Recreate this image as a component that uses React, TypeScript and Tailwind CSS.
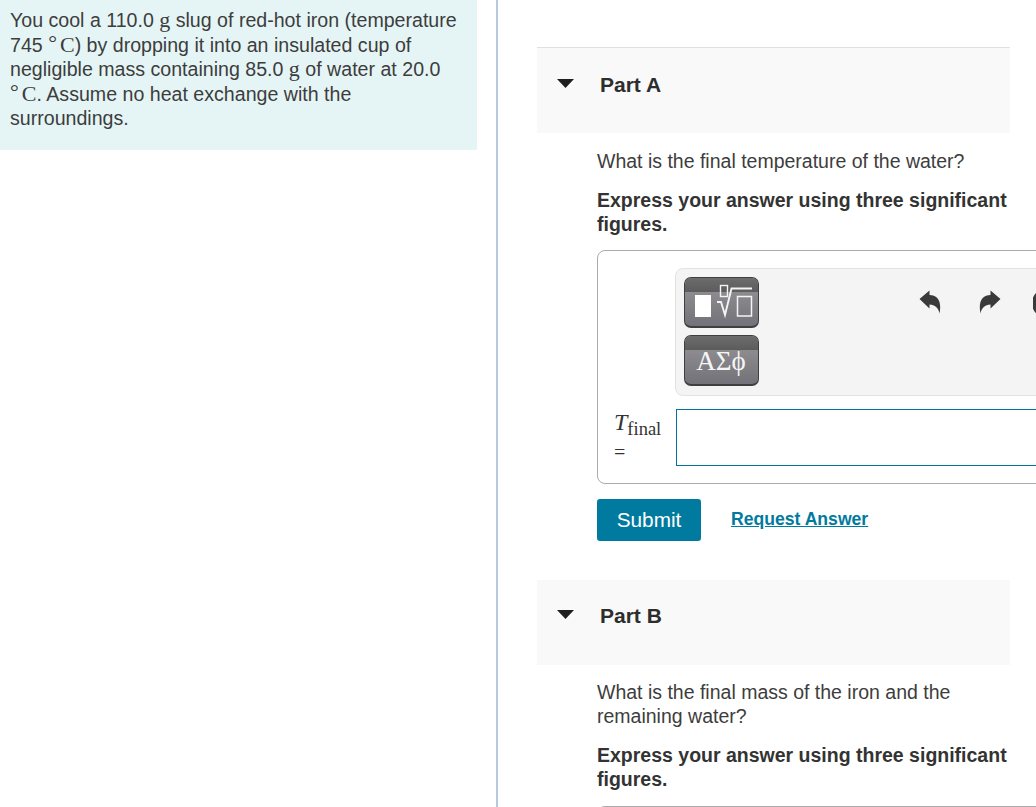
const sans = "font-['Liberation_Sans',Arial,sans-serif]";

function Serif({ children }: { children: React.ReactNode }) {
  return <span className="font-['Liberation_Serif',serif] text-[22px]">{children}</span>;
}

function Degree() {
  return <span className="font-['Liberation_Serif',serif] text-[22px]"><span className="relative top-[-2px] mr-[3px]">°</span>C</span>;
}

function PartHeader({ label, top = false }: { label: string; top?: boolean }) {
  return (
    <div className={`flex items-center bg-[#f9f9f9] pl-[20px] ${top ? "h-[86px] border-t border-[#e0e0e0]" : "h-[85px]"}`}>
      <svg width="17" height="9" viewBox="0 0 17 9" className={`mr-[26px] ${top ? "mt-[-14px]" : "mt-[-17px]"}`}>
        <path d="M0 0 H17 L8.5 9 Z" fill="#1f1f1f" />
      </svg>
      <span className={`text-[21px] font-bold text-[#2d2d2d] ${top ? "mt-[-11px]" : "mt-[-13px]"}`}>{label}</span>
    </div>
  );
}

function ToolButton({ children }: { children: React.ReactNode }) {
  return (
    <div className="relative w-[75px] h-[51px] rounded-[7px] border border-[#3f3f3f] border-b-2 overflow-hidden bg-gradient-to-b from-[#989699] to-[#737278]">
      <div className="absolute inset-x-0 top-0 h-[14px] bg-gradient-to-b from-[#6c6c6c] to-[#5c5c5c]" />
      <div className="absolute inset-0 flex items-center justify-center">{children}</div>
    </div>
  );
}

export default function App() {
  return (
    <div className={`${sans} relative h-[807px] w-[1036px] overflow-hidden bg-white flex`}>
      <div className="w-[477px] shrink-0">
        <div className="h-[150px] bg-[#e5f5f6] pl-[10px] pt-[8px] text-[19.6px] leading-[24.5px] text-[#3d3d3d]">
          <div className="whitespace-nowrap">You cool a 110.0 <Serif>g</Serif> slug of red-hot iron (temperature</div>
          <div className="whitespace-nowrap">745 <Degree />) by dropping it into an insulated cup of</div>
          <div className="whitespace-nowrap">negligible mass containing 85.0 <Serif>g</Serif> of water at 20.0</div>
          <div className="whitespace-nowrap"><Degree />. Assume no heat exchange with the</div>
          <div className="whitespace-nowrap">surroundings.</div>
        </div>
      </div>
      <div className="ml-[19px] w-[2px] shrink-0 bg-[#b8c9de]" />
      <div className="ml-[39px] w-[473px] shrink-0 pt-[47px] text-[19.5px] leading-[24px] text-[#3d3d3d]">
        <PartHeader label="Part A" top />
        <div className="pl-[60px] w-[473px]">
          <p className="mt-[16px] whitespace-nowrap">What is the final temperature of the water?</p>
          <p className="mt-[15px] font-bold text-[#333] whitespace-nowrap">Express your answer using three significant<br />figures.</p>
          <div className="mt-[14px] w-[560px] h-[234px] rounded-[8px] border border-[#ababab] pt-[17px] pl-[77px]">
            <div className="h-[128px] rounded-[8px] border border-[#e2e2e2] bg-[#f4f4f4] pt-[8px] pl-[8px] relative">
              <div className="flex flex-col gap-[7px] w-[75px]">
                <ToolButton>
                  <svg width="75" height="51" viewBox="0 0 75 51" fill="none" className="shrink-0 mt-[-1px]">
                    <rect x="11" y="19" width="16" height="22" fill="#fff" />
                    <rect x="36.5" y="9.5" width="7" height="11" stroke="#f4f4f4" strokeWidth="1.4" />
                    <path d="M33 26 H37 L41 39 L47.5 12.5 H68" stroke="#f4f4f4" strokeWidth="1.9" />
                    <rect x="53.5" y="20.5" width="14" height="19.5" stroke="#f4f4f4" strokeWidth="1.5" />
                  </svg>
                </ToolButton>
                <ToolButton>
                  <span className="font-['Liberation_Serif',serif] text-[#f5f5f5] text-[27px] leading-none mt-[3px] ml-[-1px] whitespace-nowrap">ΑΣϕ</span>
                </ToolButton>
              </div>
              <div className="absolute left-[243px] top-[21px] flex gap-[38px]">
                <svg width="22" height="24" viewBox="0 0 22 24">
                  <path d="M0.5 9 L10.5 0.5 V5 C18.5 5 23 11 20.5 23.5 C19.5 18 16 14.5 10.5 14.5 V18.5 Z" fill="#3a3a3a" />
                </svg>
                <svg width="22" height="24" viewBox="0 0 22 24">
                  <path d="M21.5 9 L11.5 0.5 V5 C3.5 5 -1 11 1.5 23.5 C2.5 18 6 14.5 11.5 14.5 V18.5 Z" fill="#3a3a3a" />
                </svg>
                <svg width="22" height="24" viewBox="0 0 22 24" className="ml-[-6px]">
                  <path d="M6 3 C2 6 1 9 1 13 C1 18 3 21 6 23" stroke="#3a3a3a" strokeWidth="4" fill="none" />
                </svg>
              </div>
            </div>
            <div className="relative">
              <div className="absolute left-[-61px] top-[1px] font-['Liberation_Serif',serif] text-[#333] w-[52px]">
                <div className="leading-[24px] whitespace-nowrap"><span className="italic text-[24px]">T</span><span className="text-[18.5px] relative top-[5px]">final</span></div>
                <div className="text-[20px] leading-[22px] mt-[5px]">=</div>
              </div>
              <div className="ml-[1px] mt-[13px] h-[57px] border border-[#00759a] bg-white" />
            </div>
          </div>
          <div className="mt-[15px] flex items-center">
            <div className="flex h-[42px] w-[104px] items-center justify-center rounded-[3px] bg-[#007a9e] text-white text-[20.8px]">Submit</div>
            <span className="ml-[30px] mt-[-2px] text-[17.6px] font-bold text-[#007a9e] underline whitespace-nowrap">Request Answer</span>
          </div>
        </div>
        <div className="mt-[39px]"><PartHeader label="Part B" /></div>
        <div className="pl-[60px] w-[473px]">
          <p className="mt-[15px]">What is the final mass of the iron and the<br />remaining water?</p>
          <p className="mt-[15px] font-bold text-[#333] whitespace-nowrap">Express your answer using three significant<br />figures.</p>
          <div className="mt-[15px] w-[560px] h-[20px] rounded-t-[8px] border-t border-[#ababab]" />
        </div>
      </div>
    </div>
  );
}
